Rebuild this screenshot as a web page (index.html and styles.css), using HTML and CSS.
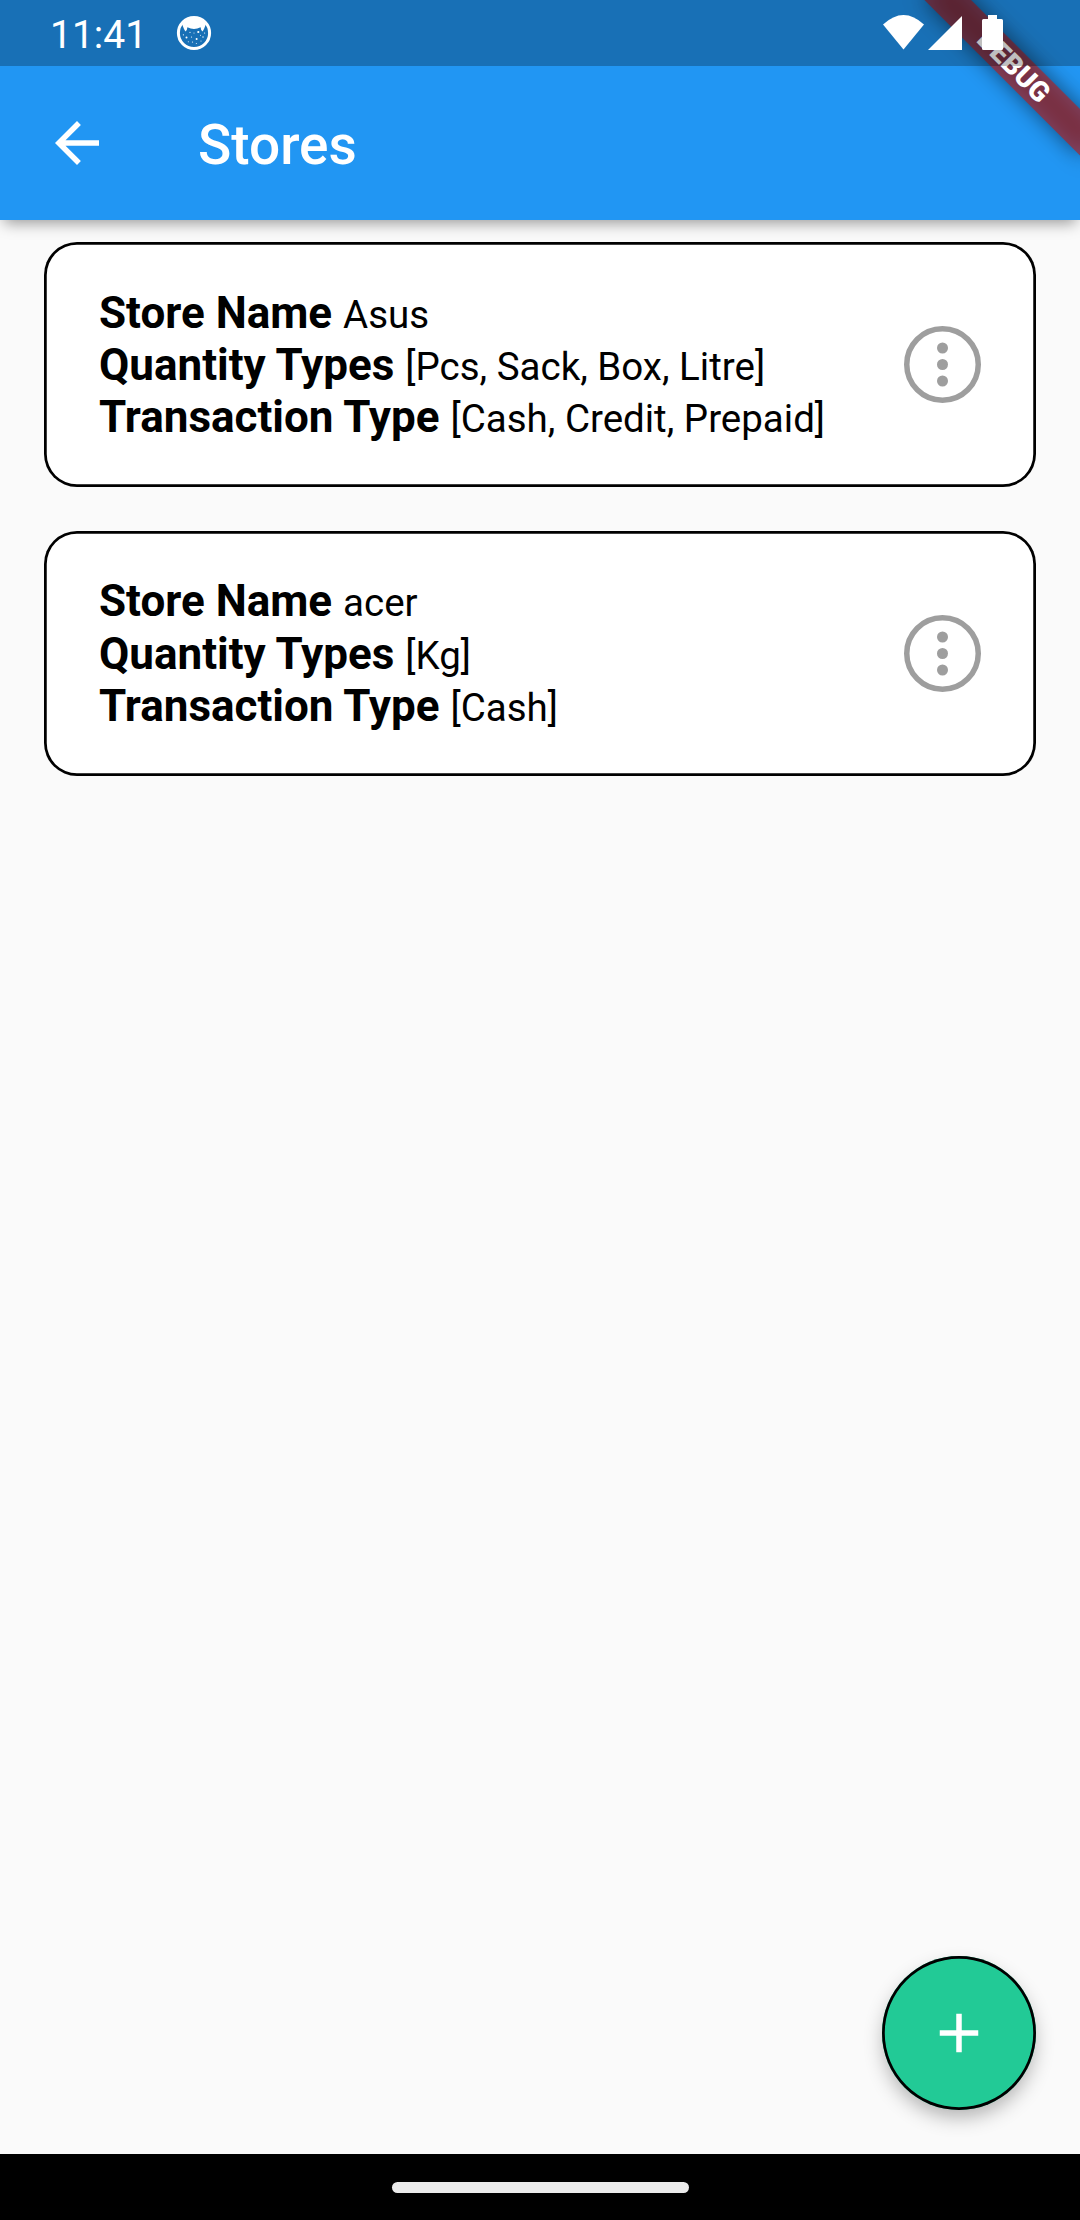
FILE: index.html
```html
<!DOCTYPE html>
<html lang="en">
<head>
<meta charset="utf-8">
<title>Stores</title>
<link rel="stylesheet" href="styles.css">
</head>
<body>
<div class="screen">
  <header class="app-bar">
    <svg class="back" viewBox="0 0 24 24"><path d="M20 11H7.83l5.59-5.59L12 4l-8 8 8 8 1.41-1.41L7.83 13H20v-2z"/></svg>
    <h1 class="title">Stores</h1>
  </header>

  <main class="content">
    <section class="card">
      <div class="details">
        <p class="row"><b>Store Name</b> <span>Asus</span></p>
        <p class="row"><b>Quantity Types</b> <span>[Pcs, Sack, Box, Litre]</span></p>
        <p class="row"><b>Transaction Type</b> <span>[Cash, Credit, Prepaid]</span></p>
      </div>
      <svg class="more" viewBox="0 0 28 28"><circle class="ring" cx="14" cy="14" r="13"/><circle cx="14" cy="8" r="2"/><circle cx="14" cy="14" r="2"/><circle cx="14" cy="20" r="2"/></svg>
    </section>
    <section class="card">
      <div class="details">
        <p class="row"><b>Store Name</b> <span>acer</span></p>
        <p class="row"><b>Quantity Types</b> <span>[Kg]</span></p>
        <p class="row"><b>Transaction Type</b> <span>[Cash]</span></p>
      </div>
      <svg class="more" viewBox="0 0 28 28"><circle class="ring" cx="14" cy="14" r="13"/><circle cx="14" cy="8" r="2"/><circle cx="14" cy="14" r="2"/><circle cx="14" cy="20" r="2"/></svg>
    </section>
  </main>

  <nav class="nav-bar"><div class="pill"></div></nav>

  <div class="fab">
    <svg viewBox="0 0 24 24"><path d="M19 13h-6v6h-2v-6H5v-2h6V5h2v6h6v2z"/></svg>
  </div>

  <div class="debug"><span>DEBUG</span></div>

  <div class="status-bar">
    <span class="clock">11:41</span>
    <svg class="app-icon" viewBox="0 0 36 36">
      <circle class="rim" cx="18" cy="18" r="15.6"/>
      <path d="M6 9 A15.6 15.6 0 0 1 30 9 L28 14 L26.600 16.500 L25.200 15 L24.600 12.200 Q18 15.800 11.400 12.200 L10.800 15 L9.400 16.500 L8 14 Z"/>
      <circle cx="10.5" cy="22.5" r="1"/><circle cx="22.3" cy="17" r="1.1"/><circle cx="20.6" cy="24" r="1"/>
      <circle cx="14" cy="17.3" r=".6"/><circle cx="15.5" cy="22" r=".6"/><circle cx="27" cy="22" r=".7"/>
      <circle cx="12.3" cy="26.8" r=".5"/><circle cx="16.5" cy="27" r=".6"/><circle cx="20.3" cy="28.5" r=".5"/>
      <circle cx="25" cy="26" r=".5"/><circle cx="7.4" cy="19.8" r=".6"/><circle cx="18" cy="18" r=".5"/><circle cx="24.5" cy="20.3" r=".5"/><circle cx="28.6" cy="18" r=".6"/>
    </svg>
    <svg class="indicators" viewBox="0 0 120 36">
      <path d="M0 9.5Q20.5-9.500 41 9.500L20.500 34.500Z"/>
      <path d="M79 1V35H45Z"/>
      <path d="M105 0h9v4h4.500q1.500 0 1.500 1.500v28q0 1.500-1.500 1.500h-18q-1.500 0-1.500-1.500v-28q0-1.500 1.500-1.500h4.500z"/>
    </svg>
  </div>
</div>
</body>
</html>
```
FILE: styles.css
```css
* {
  box-sizing: border-box;
  margin: 0;
}

body {
  font-family: Roboto, "Liberation Sans", sans-serif;
  background: #fafafa;
}

svg {
  display: block;
  flex: none;
  fill: #fff;
}

.screen {
  position: relative;
  display: flex;
  flex-direction: column;
  width: 1080px;
  height: 2220px;
  overflow: hidden;
  background: #fafafa;
}

.app-bar {
  display: flex;
  align-items: center;
  gap: 88px;
  height: 220px;
  padding: 66px 44px 0;
  background: #2196f3;
  box-shadow: 0 7px 14px -4px rgba(0, 0, 0, 0.4);
}

.back {
  width: 66px;
  height: 66px;
}

.title {
  padding-top: 3px;
  color: #fff;
  font-size: 55px;
  font-weight: 500;
  line-height: 66px;
}

.content {
  flex: 1;
  display: flex;
  flex-direction: column;
  gap: 44px;
  padding: 22px 44px;
}

.card {
  display: flex;
  align-items: center;
  justify-content: space-between;
  height: 244.75px;
  padding: 0 55px;
  border-radius: 33px;
  background: #fff;
  box-shadow: inset 0 0 0 2.75px #000;
}

.details {
  padding-top: 1px;
}

.row {
  color: #000;
  font-size: 44px;
  line-height: 52.25px;
  white-space: nowrap;
}

.row b {
  font-weight: 700;
}

.row span {
  font-size: 38.5px;
  line-height: 1;
}

.more {
  width: 77px;
  height: 77px;
  fill: #9e9e9e;
}

.ring {
  fill: none;
  stroke: #9e9e9e;
  stroke-width: 2;
}

.nav-bar {
  display: flex;
  align-items: center;
  justify-content: center;
  height: 66px;
  background: #000;
}

.pill {
  width: 297px;
  height: 11px;
  border-radius: 6px;
  background: #ebebeb;
}

.fab {
  position: absolute;
  right: 44px;
  bottom: 110px;
  display: flex;
  align-items: center;
  justify-content: center;
  width: 154px;
  height: 154px;
  border-radius: 50%;
  background: #22ca96;
  box-shadow: inset 0 0 0 2.75px #000, 0 9px 20px -2px rgba(0, 0, 0, 0.3);
}

.fab svg {
  width: 66px;
  height: 66px;
}

/* Corner ribbon rotated around the top right corner of the screen */
.debug {
  position: absolute;
  top: 77px;
  right: 0;
  width: 220px;
  height: 33px;
  margin-right: -110px;
  transform: rotate(45deg);
  transform-origin: 110px -77px;
}

.debug::before,
.debug::after {
  content: "";
  position: absolute;
  inset: 0;
}

.debug::before {
  background: rgba(0, 0, 0, 0.5);
  filter: blur(10.9px);
}

.debug::after {
  background: rgba(183, 28, 28, 0.627);
}

.debug span {
  position: relative;
  z-index: 1;
  display: block;
  color: #fff;
  font-size: 28px;
  font-weight: 900;
  line-height: 33px;
  text-align: center;
}

.status-bar {
  position: absolute;
  inset: 0 0 auto;
  display: flex;
  align-items: center;
  height: 66px;
  padding: 0 77px 0 50px;
  background: rgba(0, 0, 0, 0.25);
}

.clock {
  padding-top: 3px;
  color: #fff;
  font-size: 39px;
  line-height: 66px;
}

.app-icon {
  width: 36px;
  height: 36px;
  margin-left: 29px;
}

.rim {
  fill: none;
  stroke: #fff;
  stroke-width: 3;
}

.indicators {
  width: 120px;
  height: 36px;
  margin-left: auto;
}
```
